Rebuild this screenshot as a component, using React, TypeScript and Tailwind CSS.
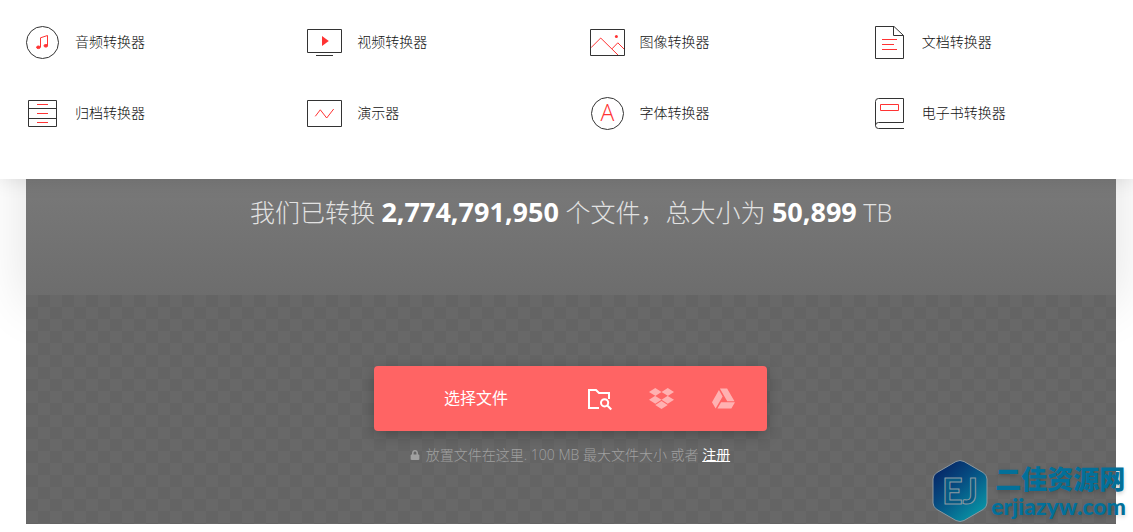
import React from 'react';
import { FaDropbox, FaGoogleDrive, FaLock } from 'react-icons/fa';

interface Converter {
    name: string;
    icon: React.ReactNode;
}

const converters: Converter[] = [
    {
        name: '音频转换器',
        icon: <>
            <circle cx="17.5" cy="17.5" r="16" />
            <g className="stroke-[#ff3333]">
                <path d="M15.5 22V12.8L22.5 10.5V20.5" />
                <ellipse cx="13.4" cy="22.3" rx="1.8" ry="1.3" className="fill-[#ff3333]" />
                <ellipse cx="20.8" cy="20.8" rx="1.8" ry="1.3" className="fill-[#ff3333]" />
            </g>
        </>,
    },
    {
        name: '视频转换器',
        icon: <>
            <path d="M.5 4.5H34.5V27.5H.5ZM9 30.5H26" />
            <path d="M15 11L21.8 16L15 21Z" className="fill-[#ff3333] stroke-none" />
        </>,
    },
    {
        name: '图像转换器',
        icon: <>
            <path d="M1 22.7L10.7 13L28.5 30.5M22 23.8L27.8 17.8L34.5 24.5" className="stroke-[#ff3333]" />
            <circle cx="26.4" cy="11.4" r="1.5" className="fill-[#ff3333] stroke-none" />
            <path d="M.5 4.5H34.5V30.5H.5Z" />
        </>,
    },
    {
        name: '文档转换器',
        icon: <>
            <path d="M3.5 1.5H22L31.5 10.5V33.5H3.5ZM21.5 1.5V10.5H31.5" />
            <path d="M10 14.5H25M10 19.5H22M10 24.5H25" className="stroke-[#ff3333]" />
        </>,
    },
    {
        name: '归档转换器',
        icon: <>
            <path d="M3.5 4.5H31.5V30.5H3.5ZM3.5 12.5H31.5M3.5 22.5H31.5" />
            <path d="M12 8.5H23M12 17.5H23M12 26.5H23" className="stroke-[#ff3333]" />
        </>,
    },
    {
        name: '演示器',
        icon: <>
            <path d="M.5 4.5H34.5V30.5H.5Z" />
            <path d="M8.3 20.3L13.3 13.8L19.7 22L26.7 13" className="stroke-[#ff3333]" />
        </>,
    },
    {
        name: '字体转换器',
        icon: <>
            <circle cx="17.5" cy="17.5" r="16" />
            <text x="17.5" y="25" textAnchor="middle" className="fill-[#ff3333] stroke-none font-['Open_Sans'] text-[23px] font-light">A</text>
        </>,
    },
    {
        name: '电子书转换器',
        icon: <>
            <path d="M3.5 29.5V5.5Q3.5 2.5 6.5 2.5H31.5V26.5H6.5Q3.5 26.5 3.5 29.5Q3.5 32.5 6.5 32.5H32" />
            <path d="M8.5 8.5H26.5V14.5H8.5Z" className="stroke-[#ff3333]" />
        </>,
    },
];

const ConverterMenu = () => (
    <nav className="relative z-10 grid grid-cols-4 gap-y-9 bg-white px-[2px] pt-[25px] pb-12 shadow-[0_0_20px_rgba(0,0,0,0.12)]">
        {converters.map((item) => (
            <a key={item.name} href="#" className="flex items-center gap-[15px] pl-[23px] text-sm font-light text-[#111]">
                <svg viewBox="0 0 35 35" className="size-[35px] shrink-0 fill-none stroke-[#333]">{item.icon}</svg>
                <span className="pb-[2px]">{item.name}</span>
            </a>
        ))}
    </nav>
);

const FilePicker = () => (
    <div className="flex h-[65px] w-[393px] items-center rounded bg-[#ff6464] pr-3 text-white shadow-[0_4px_14px_rgba(0,0,0,0.25)]">
        <button type="button" className="h-full flex-1 pb-[2px] pl-[10px] text-base">选择文件</button>
        <button type="button" aria-label="浏览文件" className="flex h-full w-[62px] items-center justify-center">
            <svg viewBox="0 0 25 24" className="h-6 w-[25px] fill-none stroke-white stroke-2">
                <path d="M12 21H2V3H9L12 6H22V12" />
                <circle cx="17.6" cy="15.8" r="3.6" />
                <path d="M20.3 18.5L24.3 22.5" />
            </svg>
        </button>
        <button type="button" aria-label="Dropbox" className="flex h-full w-[62px] items-center justify-center">
            <FaDropbox size={25} className="text-[#ffb1b1]" />
        </button>
        <button type="button" aria-label="Google Drive" className="flex h-full w-[62px] items-center justify-center">
            <FaGoogleDrive size={23} className="text-[#ffb1b1]" />
        </button>
    </div>
);

const SiteMark = () => (
    <div className="absolute right-[7px] bottom-[9px] flex items-center gap-[2px] text-[#02709a]">
        <svg viewBox="0 0 58 64" className="h-16 w-[58px]">
            <defs>
                <linearGradient id="hex" x1="0" y1="0" x2="0.8" y2="1">
                    <stop offset="0" stopColor="#06195c" />
                    <stop offset="0.45" stopColor="#064a80" />
                    <stop offset="1" stopColor="#0899a8" />
                </linearGradient>
            </defs>
            <path d="M25 2.5Q29 .5 33 2.5L52 13.5Q56 16 56 20V44Q56 48 52 50.5L33 61.5Q29 63.5 25 61.5L6 50.5Q2 48 2 44V20Q2 16 6 13.5Z" fill="url(#hex)" stroke="#8b98a0" />
            <text x="29" y="45" textAnchor="middle" fill="#075a83" stroke="#8c9ba3" className="[font-family:'Lato'] text-[36px] font-bold">EJ</text>
        </svg>
        <div className="[text-shadow:0_2px_4px_rgba(0,0,0,0.2)]">
            <p className="pl-1 text-[26px] leading-[30px] font-black">二佳资源网</p>
            <p className="[font-family:'Lato'] text-[23px] leading-6 font-black">erjiazyw.com</p>
        </div>
    </div>
);

const App = () => {
    return (
        <div className="relative bg-white pb-2 font-['Open_Sans','Noto_Sans_CJK_SC',sans-serif]">
            <ConverterMenu />
            <main className="mr-[17px] ml-[26px] shadow-[0_-220px_50px_rgba(0,0,0,0.12)]">
                <section className="h-[116px] bg-linear-to-b from-[#797979] to-[#6d6d6d] pt-4 text-center">
                    <h1 className="text-[25px] leading-[34px] font-light text-[#e2e2e2]">
                        我们已转换 <strong className="text-[27px] font-bold text-white">2,774,791,950</strong> 个文件，总大小为 <strong className="text-[27px] font-bold text-white">50,899</strong> TB
                    </h1>
                </section>
                <section className="flex flex-col items-center bg-[#686868] bg-[repeating-conic-gradient(#646464_0_25%,#686868_0_50%)] bg-size-[24px_24px] pt-[71px] pr-[2px] pb-[58px]">
                    <FilePicker />
                    <p className="mt-[13px] mb-px flex items-center text-sm leading-[21px] font-light text-[#a0a0a0]">
                        <FaLock size={10} className="mr-[6px]" />
                        <span>放置文件在这里. 100 MB 最大文件大小 或者 <a href="#" className="font-normal text-white underline">注册</a></span>
                    </p>
                </section>
            </main>
            <SiteMark />
        </div>
    );
};

export default App;
